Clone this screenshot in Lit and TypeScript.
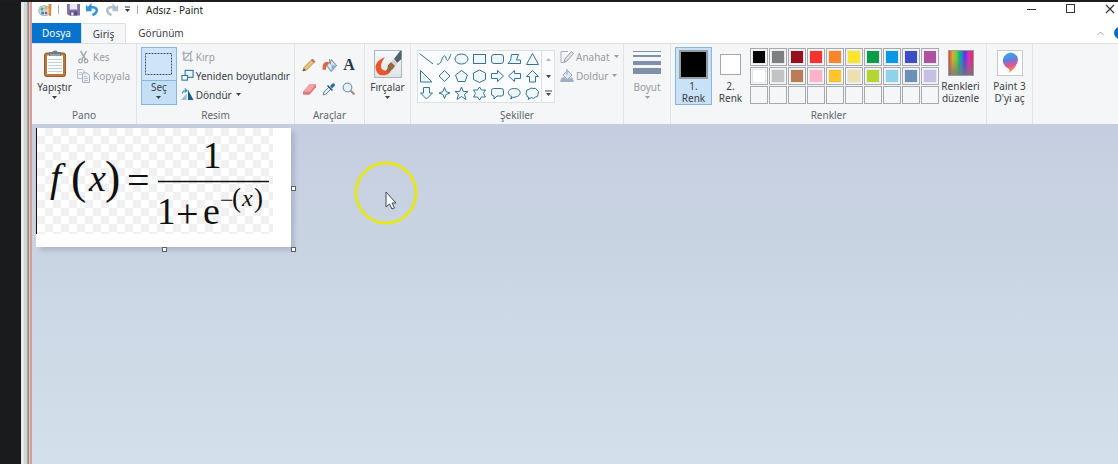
import { LitElement, html, css, svg } from "lit";
import { customElement } from "lit/decorators.js";

const COLORS: string[] = [
  "#000000", "#7f7f7f", "#98101f", "#fb322d", "#fd8529", "#fde52b", "#0c9c48", "#0698e6", "#3c4dc8", "#ae52a0",
  "#ffffff", "#c3c3c3", "#bd7c58", "#fdb2c8", "#fdc42c", "#ecdfb0", "#b3d52f", "#8fd3ea", "#6a90b9", "#c8c0e4",
];

const SHAPES: [string, unknown][] = [
  ["Çizgi", svg`<path d="M1.500 2.500L15 13"/>`],
  ["Eğri", svg`<path d="M1 13C4 14 5 11 6 8S9 3 10 7S12 11 15 3"/>`],
  ["Elips", svg`<ellipse cx="8.500" cy="8" rx="6.500" ry="5"/>`],
  ["Dikdörtgen", svg`<rect x="2.500" y="3.500" width="12" height="9"/>`],
  ["Yuvarlatılmış dikdörtgen", svg`<rect x="2.500" y="3.500" width="12" height="9" rx="2.500"/>`],
  ["Çokgen", svg`<path d="M5.500 3.500H12.500L10.500 9H14.500V12.500H2L4.500 9.500Z"/>`],
  ["Üçgen", svg`<path d="M8.500 2.500L14.500 13.500H2.500Z"/>`],
  ["Dik üçgen", svg`<path d="M2.500 2.500V14H14Z"/>`],
  ["Baklava", svg`<path d="M8.500 2.500L14 8L8.500 13.500L3 8Z"/>`],
  ["Beşgen", svg`<path d="M8.500 2.500L14.500 7L12 13.500H5L2.500 7Z"/>`],
  ["Altıgen", svg`<path d="M8.500 2L14.500 5V11.500L8.500 14.500L2.500 11.500V5Z"/>`],
  ["Sağ ok", svg`<path d="M2.500 5.500H8.500V2.500L14.500 8L8.500 13.500V10.500H2.500Z"/>`],
  ["Sol ok", svg`<path d="M14.500 5.500H8.500V2.500L2.500 8L8.500 13.500V10.500H14.500Z"/>`],
  ["Yukarı ok", svg`<path d="M5.500 14V8.500H2.500L8.500 2.500L14.500 8.500H11.500V14Z"/>`],
  ["Aşağı ok", svg`<path d="M5.500 2.500V8H2.500L8.500 14L14.500 8H11.500V2.500Z"/>`],
  ["Dört köşeli yıldız", svg`<path d="M8.500 2.500L10 6.500L14 8L10 9.500L8.500 13.500L7 9.500L3 8L7 6.500Z"/>`],
  ["Beş köşeli yıldız", svg`<path d="M8.500 2L10.300 6.500H15L11.500 9.500L13 14.500L8.500 11.500L4 14.500L5.500 9.500L2 6.500H6.700Z"/>`],
  ["Altı köşeli yıldız", svg`<path d="M8.500 2L10.500 5H14.500L12.500 8.500L14.500 12H10.500L8.500 15L6.500 12H2.500L4.500 8.500L2.500 5H6.500Z"/>`],
  ["Yuvarlak dikdörtgen balon", svg`<path d="M4.500 3.500H12.500Q14.500 3.500 14.500 5.500V9Q14.500 11 12.500 11H8L5 14V11Q2.500 11 2.500 9V5.500Q2.500 3.500 4.500 3.500Z"/>`],
  ["Oval balon", svg`<path d="M4.500 14L6 11.500C.5 10 1 3.500 8.500 3.500C16 3.500 16 11.500 9 12Q6.500 12.500 4.500 14Z"/>`],
  ["Bulut balon", svg`<path d="M5 12.500Q3 12.500 3 10.500Q1 9 2.500 7Q2 4 5 4.500Q7 2 9 3.500Q12 2.500 13 5Q15.500 6.500 14 9Q14.500 12 11.500 12Q9 14.500 7.500 12.500L4 14.500Z"/>`],
];

const caret = html`<svg class="caret" width="5" height="3" viewBox="0 0 5 3" aria-hidden="true"><path d="M0 0H5L2.500 3Z" fill="currentColor"/></svg>`;

const ico = {
  app: svg`<path d="M2 4Q6 1 11 4Q14 9 10 12Q4 14 1 10Q0 6 2 4Z" fill="#c6d9e4" stroke="#85a4b6" stroke-width=".7"/><circle cx="4" cy="6" r="1.500" fill="#4bb061"/><circle cx="8" cy="5" r="1.500" fill="#ecae35"/><circle cx="4.500" cy="10" r="1.500" fill="#3b7fd4"/><circle cx="8" cy="10" r="1.300" fill="#d14c46"/><path d="M10.500 1H13.500L13 13H11Z" fill="#e3893c"/>`,
  save: svg`<path d="M0 1H14V13.500H2L0 11.500Z" fill="#8472ac"/><path d="M3 1H11V7H3Z" fill="#eeeaf5"/><path d="M3 9H11V13.500H3Z" fill="#5b5078"/><path d="M4.500 10H7V13.500H4.500Z" fill="#e8e4f0"/>`,
  undo: svg`<path d="M3 4.500H7.500Q12 5 11.500 8.500Q11 11.500 7 13" fill="none" stroke="#2f93dc" stroke-width="2.800"/><path d="M6 0V9H0V2L2 4Z" fill="#2f93dc"/>`,
  redo: svg`<path d="M11 4.500H6.500Q2 5 2.500 8.500Q3 11.500 7 13" fill="none" stroke="#b4bec8" stroke-width="2.800"/><path d="M8 0V9H14V2L12 4Z" fill="#b4bec8"/>`,
  paste: svg`<rect x="1.500" y="3" width="21" height="23.500" rx="2" fill="#b9783d" stroke="#965c2c"/><rect x="4" y="5.500" width="16" height="18.500" fill="#fcfdfd"/><path d="M5 9.500H19M5 12.500H19M5 15.500H19M5 18.500H19M5 21.500H19" stroke="#c2d1d8"/><path d="M6 2H9Q12-1 15 2H18V6H6Z" fill="#737c80"/><path d="M7 5H17" stroke="#b8c0c2"/>`,
  cut: svg`<path d="M3.500 1L9 10M9.500 1L4.500 10" stroke="#a2a8ad" stroke-width="1.500" fill="none"/><circle cx="3.500" cy="11" r="1.800" fill="none" stroke="#a2a8ad" stroke-width="1.300"/><circle cx="9" cy="11" r="1.800" fill="none" stroke="#a2a8ad" stroke-width="1.300"/>`,
  copy: svg`<path d="M.5 .5H5.500L7.500 2.500V9.500H.5Z" fill="#f3f5f7" stroke="#b5bdc5"/><path d="M2 3.500H5M2 5.500H5" stroke="#b5bfc9" stroke-width=".8"/><path d="M5.500 4H10L12.500 6.500V13.500H5.500Z" fill="#eef1f3" stroke="#a7b0ba"/><path d="M7 7.500H10M7 9.500H11M7 11.500H11" stroke="#a5b0bc" stroke-width=".8"/>`,
  crop: svg`<path d="M3 1V11H13M1 3.500H10.500V13M3 11L12 1" fill="none" stroke="#a0a5aa" stroke-width="1.200"/>`,
  resize: svg`<rect x="4.500" y="1.500" width="8.500" height="7.500" fill="#eaf4fa" stroke="#3178a0" stroke-width="1.200"/><rect x="1" y="7" width="6" height="5" fill="#fff" stroke="#3178a0" stroke-width="1.200"/>`,
  rotate: svg`<path d="M0 13L6 6V13Z" fill="#a6bac5"/><path d="M7.500 2L13.500 13H7.500Z" fill="#17608d"/><path d="M1.500 6Q2 2 6 3M4 .5L6.500 3L4 5" fill="none" stroke="#3e91bd" stroke-width="1.200"/>`,
  pencil: svg`<path d="M1 13L2 9.500L10.500 1L13 3.500L4.500 12Z" fill="#edc572" stroke="#9d7a47" stroke-width=".8"/><path d="M10.500 1L13 3.500L11.500 5L9 2.500Z" fill="#b27a72"/><path d="M1 13L2 10.500L3.500 12Z" fill="#423c36"/>`,
  fill: svg`<path d="M4.500 7L9 2L13.500 7L8.500 12.500Z" fill="#dfe9f0" stroke="#7f9cb2"/><path d="M8 6L7 1" stroke="#6f8797"/><path d="M.5 11Q0 3.500 5 3.500L7 4.500Q4 6 3.500 11Z" fill="#e4613a"/><path d="M9 6L13 7.500L9 11Z" fill="#85b1d0"/>`,
  eraser: svg`<path d="M1 9L7 2H13V5L7 12H1Z" fill="#e0757b"/><path d="M1 9L7 2H13L7.500 9Z" fill="#f3a3a2"/>`,
  pick: svg`<path d="M1 13L2 10L7 5L9 7L4 12Z" fill="#e2eff6" stroke="#648ca5"/><path d="M6 3L11 8L10 9L5 4Z" fill="#244f78"/><path d="M8 4L10.500 1.500Q13 .5 13 3.500L10 6.500Z" fill="#2e6da1"/>`,
  zoom: svg`<path d="M8.500 8.500L12.500 12.500" stroke="#a38a76" stroke-width="2"/><circle cx="5.500" cy="5.500" r="4.300" fill="#e4f1f9" stroke="#8c9cab" stroke-width="1.300"/>`,
  brush: svg`<defs><linearGradient id="bg" x2="0" y2="1"><stop stop-color="#f8fafb"/><stop offset="1" stop-color="#dde3e7"/></linearGradient></defs><rect x=".5" y=".5" width="27" height="27" fill="url(#bg)" stroke="#afb7bd"/><path d="M11 7Q1 11 1.500 18Q3 27 12 25Q18 23 17 18Q13 22 9 20Q4 16 11 7Z" fill="#ec552b"/><path d="M20 9L26 1H27.500V9L23 13Z" fill="#53606a"/><path d="M17 12L20 9L23.500 13L21 16Z" fill="#d0d2d3"/><path d="M17 12L21 16Q18 22 11 22Q14 19 14 15Z" fill="#9b663d"/>`,
  outline: svg`<path d="M8 1.500H1V12.500H4" fill="none" stroke="#a6adb4"/><path d="M4 12.500L5 9L11.500 1.500L13.500 3.500L7 11Z" fill="#e4e7ea" stroke="#969da5"/>`,
  shapeFill: svg`<path d="M3 6L7.500 1.500L12 6L7.500 10.500Z" fill="#e2e9f0" stroke="#94a3b5"/><path d="M0 13Q1 8 4 8Q7 12 12 8L14 13Z" fill="#9fb0c5"/><path d="M7 0V6" stroke="#94a3b5"/>`,
};

@customElement("app-root")
export class AppRoot extends LitElement {
  static styles = css`
    :host { display: flex; min-height: 100vh; box-sizing: border-box; border-top: 2px solid #1d1d1f; overflow: hidden; font: 10px/12px "Noto Sans", "Open Sans", sans-serif; color: #3b4148; }
    * { box-sizing: border-box; }
    button { font: inherit; color: inherit; background: none; border: 0; padding: 0; margin: 0; cursor: default; }
    svg { display: block; flex: none; }
    .desk { width: 21px; flex: none; background: #1a1b1d; }
    .edge { width: 11px; flex: none; background: linear-gradient(90deg, #e9e9e8 0 3px, #d5d5d3 3px 6px, #a5a3a1 6px 7px, #8f8c8a 7px 8px, #d6cac7 8px 9px, #dc9a95 9px 11px); }
    .window { flex: 1; min-width: 0; display: flex; flex-direction: column; background: #fff; }
    .title { height: 21px; display: flex; align-items: flex-start; padding-left: 6px; color: #1c1e20; }
    .quick { display: flex; align-items: center; height: 15px; gap: 6px; }
    .rule { width: 1px; height: 9px; margin-right: 2px; background: #a9aaac; }
    h1 { margin: 0; font: inherit; }
    .sys { display: flex; margin-left: auto; height: 14px; }
    .sys button { width: 40px; display: grid; place-items: center; }
    .sys .close { width: 27px; padding-left: 11px; }
    .sys .min { width: 38px; }
    .tabs { height: 20px; display: flex; }
    .tab { width: 70px; }
    .tab.file { width: 49px; background: #0673cc; color: #fff; }
    .tab.on { width: 45px; background: #f5f6f8; border: 1px solid #dddfe1; border-bottom: 0; }
    .help { margin-left: auto; display: flex; align-items: center; gap: 10px; overflow: hidden; width: 21px; }
    .ribbon { height: 81px; display: flex; background: #f4f6f8; border-top: 1px solid #dddfe2; overflow: hidden; }
    .group { flex: none; display: flex; flex-direction: column; border-right: 1px solid #e1e3e6; padding: 3px 4px 2px; }
    .items { display: flex; flex: 1; }
    .group h2 { margin: 0; font: inherit; line-height: 14px; text-align: center; color: #61676d; }
    .pano { width: 105px; }
    .resim { width: 158px; }
    .araclar { width: 70px; }
    .brushes { width: 46px; }
    .sekiller { width: 213px; }
    .size { width: 47px; }
    .renkler { width: 316px; }
    .p3d { width: 46px; }
    .big { height: 58px; display: flex; flex-direction: column; align-items: center; padding-top: 3px; }
    .big .pic { height: 31px; }
    .caret { margin-top: 3px; }
    .rows { display: flex; flex-direction: column; }
    .row { height: 19px; display: flex; align-items: center; gap: 2px; white-space: nowrap; }
    .row .caret { margin: 0 0 0 2px; }
    .off { color: #989da3; }
    .paste { width: 37px; }
    .pano .rows { padding-left: 4px; }
    .select { width: 37px; border: 1px solid #86b8df; background: #c5e0f6; padding: 0; }
    .select .pic { height: 33px; width: 100%; border-bottom: 1px solid #86b8df; display: grid; place-items: center; background: #cfe5f7; }
    .resim .rows { padding-left: 4px; }
    .tools { display: grid; grid-template-columns: repeat(3, 20px); grid-template-rows: 24px 24px; place-items: center; padding: 6px 0 0; height: 60px; }
    .letter { font: bold 16px/16px "Liberation Serif", serif; color: #27364a; }
    .brushes .items, .size .items, .p3d .items { justify-content: center; }
    .gallery { display: flex; height: 53px; margin: 3px 5px 0 2px; border: 1px solid #dbe1e7; background: #fbfcfd; }
    .shapes { display: grid; grid-template-columns: repeat(7, 17px); grid-template-rows: repeat(3, 17px); width: 123px; justify-content: space-between; }
    .shapes svg { fill: #f1f8fc; stroke: #36729a; stroke-width: 1; }
    .scroll { width: 13px; border-left: 1px solid #dbe1e7; display: grid; grid-template-rows: repeat(3, 17px); place-items: center; }
    .scroll .caret { margin: 0; }
    .color { width: 37px; height: 58px; display: flex; flex-direction: column; align-items: center; line-height: 12px; border: 1px solid transparent; }
    .color.on { border-color: #86b8df; background: #c9e2f7; }
    .color .pic { height: 32px; display: grid; place-items: center; }
    .chip { display: block; width: 21px; height: 21px; border: 1px solid #a4a7aa; background: #fff; }
    .on .chip { width: 29px; height: 29px; border: 2px solid #969ca1; background: #000; }
    .palette { display: grid; grid-template-columns: repeat(10, 18px); grid-template-rows: repeat(3, 18px); gap: 1px; margin: 1px 0 0 1px; }
    .swatch { border: 1px solid #a6a9ad; padding: 1px; }
    .swatch i { display: block; height: 100%; border: 1px solid #e7e9ec; }
    .swatch.void i { border: 0; }
    .edit { width: 43px; }
    .edit .pic { height: 30px; }
    .spectrum { width: 26px; height: 26px; border: 1px solid #999da1; display: block; background: linear-gradient(0deg, #777c 0, #7770 70%), linear-gradient(90deg, #e43e3a, #e7a52e 14%, #72cf3a 30%, #1bb968 42%, #227fde 54%, #5c35dc 66%, #d82fc3 82%, #ed2750); }
    .three { width: 26px; height: 26px; border: 1px solid #c5cad0; background: #fdfdfe; display: block; }
    .work { flex: 1; position: relative; padding: 4px; background: linear-gradient(#c5cee0 0, #c9d4e2 35%, #cfdce8 75%, #d3dfea); }
    .paper { width: 255px; height: 119px; background: #fff; box-shadow: 4px 4px 4px #8895a966; position: relative; }
    .image { width: 237px; height: 106px; border-left: 1px solid #111; background: repeating-conic-gradient(#f1f1f1 0 25%, #fff 0 50%) 0 0 / 16px 16px; }
    .formula text { font-family: "Liberation Serif", serif; fill: #101010; }
    .handle { position: absolute; width: 5px; height: 5px; border: 1px solid #596068; background: #fff; }
    .handle.e { left: 255px; top: 58px; }
    .handle.s { left: 126px; top: 119px; }
    .handle.se { left: 255px; top: 119px; }
    .pointer { position: absolute; left: 322px; top: 37px; }
  `;

  private icon(pic: unknown, size = 14) {
    return html`<svg width=${size} height=${size} viewBox="0 0 14 14" aria-hidden="true">${pic}</svg>`;
  }

  private swatches() {
    return Array.from({ length: 30 }, (_, i) => COLORS[i]
      ? html`<button class="swatch" aria-label="Renk ${COLORS[i]}"><i style="background:${COLORS[i]}"></i></button>`
      : html`<button class="swatch void" aria-label="Boş renk"><i></i></button>`);
  }

  render() {
    return html`
      <div class="desk"></div>
      <div class="edge"></div>
      <main class="window">
        <header class="title">
          <div class="quick">
            ${this.icon(ico.app)}
            <span class="rule"></span>
            <button aria-label="Kaydet">${this.icon(ico.save, 13)}</button>
            <button aria-label="Geri al">${this.icon(ico.undo, 13)}</button>
            <button aria-label="Yinele">${this.icon(ico.redo, 13)}</button>
            <button aria-label="Özelleştir"><svg width="7" height="7" viewBox="0 0 7 7"><path d="M1 1H6" stroke="#333"/><path d="M1 3H6L3.500 6Z" fill="#333"/></svg></button>
            <span class="rule"></span>
            <h1>Adsız - Paint</h1>
          </div>
          <div class="sys">
            <button class="min" aria-label="Simge durumuna küçült"><svg width="10" height="10"><path d="M0 5.500H9" stroke="#333"/></svg></button>
            <button aria-label="Ekranı kapla"><svg width="10" height="10"><rect x=".5" y=".5" width="8" height="8" fill="none" stroke="#333"/></svg></button>
            <button class="close" aria-label="Kapat"><svg width="10" height="10"><path d="M1 1L9 9M9 1L1 9" stroke="#333" stroke-width="1.200"/></svg></button>
          </div>
        </header>
        <nav class="tabs">
          <button class="tab file">Dosya</button>
          <button class="tab on">Giriş</button>
          <button class="tab">Görünüm</button>
          <div class="help">
            <svg width="7" height="5" viewBox="0 0 7 5"><path d="M.5 4L3.500 1L6.500 4" fill="none" stroke="#a1a4a8"/></svg>
            <svg width="12" height="12"><circle cx="6" cy="6" r="6" fill="#0a6cc0"/></svg>
          </div>
        </nav>
        <div class="ribbon">
          <section class="group pano">
            <div class="items">
              <button class="big paste"><span class="pic"><svg width="24" height="28" viewBox="0 0 24 28">${ico.paste}</svg></span>Yapıştır${caret}</button>
              <div class="rows">
                <button class="row off">${this.icon(ico.cut)}Kes</button>
                <button class="row off">${this.icon(ico.copy)}Kopyala</button>
              </div>
            </div>
            <h2>Pano</h2>
          </section>
          <section class="group resim">
            <div class="items">
              <button class="big select"><span class="pic"><svg width="27" height="23"><rect x=".5" y=".5" width="26" height="21" fill="none" stroke="#31587c" stroke-dasharray="2 1"/></svg></span>Seç${caret}</button>
              <div class="rows">
                <button class="row off">${this.icon(ico.crop, 13)}Kırp</button>
                <button class="row">${this.icon(ico.resize, 13)}Yeniden boyutlandır</button>
                <button class="row">${this.icon(ico.rotate, 13)}Döndür${caret}</button>
              </div>
            </div>
            <h2>Resim</h2>
          </section>
          <section class="group araclar">
            <div class="items tools">
              <button aria-label="Kurşun kalem">${this.icon(ico.pencil)}</button>
              <button aria-label="Boya doldur">${this.icon(ico.fill, 15)}</button>
              <button class="letter">A</button>
              <button aria-label="Silgi">${this.icon(ico.eraser, 15)}</button>
              <button aria-label="Renk seçici">${this.icon(ico.pick)}</button>
              <button aria-label="Büyüteç">${this.icon(ico.zoom)}</button>
            </div>
            <h2>Araçlar</h2>
          </section>
          <section class="group brushes">
            <div class="items"><button class="big"><span class="pic"><svg width="28" height="28" viewBox="0 0 28 28">${ico.brush}</svg></span>Fırçalar${caret}</button></div>
          </section>
          <section class="group sekiller">
            <div class="items">
              <div class="gallery">
                <div class="shapes">${SHAPES.map(([name, pic]) => html`<button aria-label=${name}><svg width="17" height="17" viewBox="0 0 17 17">${pic}</svg></button>`)}</div>
                <div class="scroll"><button class="off" aria-label="Yukarı"><svg width="5" height="3"><path d="M0 3H5L2.500 0Z" fill="#b2b6ba"/></svg></button><button aria-label="Aşağı">${caret}</button><button aria-label="Tümü"><svg width="7" height="7"><path d="M0 1H7" stroke="#40464c"/><path d="M1 3H6L3.500 6Z" fill="#40464c"/></svg></button></div>
              </div>
              <div class="rows">
                <button class="row off">${this.icon(ico.outline)}Anahat${caret}</button>
                <button class="row off">${this.icon(ico.shapeFill)}Doldur${caret}</button>
              </div>
            </div>
            <h2>Şekiller</h2>
          </section>
          <section class="group size">
            <div class="items"><button class="big off"><span class="pic"><svg width="28" height="28"><path d="M0 1.500H28" stroke="#8090aa"/><path d="M0 6H28" stroke="#8090aa" stroke-width="2"/><path d="M0 13H28" stroke="#8090aa" stroke-width="4"/><path d="M0 21H28" stroke="#8090aa" stroke-width="6"/></svg></span>Boyut${caret}</button></div>
          </section>
          <section class="group renkler">
            <div class="items">
              <button class="color on"><span class="pic"><span class="chip"></span></span><span>1.</span><span>Renk</span></button>
              <button class="color"><span class="pic"><span class="chip"></span></span><span>2.</span><span>Renk</span></button>
              <div class="palette">${this.swatches()}</div>
              <button class="big edit"><span class="pic"><span class="spectrum"></span></span><span>Renkleri</span><span>düzenle</span></button>
            </div>
            <h2>Renkler</h2>
          </section>
          <section class="group p3d">
            <div class="items"><button class="big edit"><span class="pic"><span class="three"><svg width="24" height="24" viewBox="0 0 24 24"><defs><linearGradient id="pg" x1=".3" y1="0" x2=".5" y2="1"><stop stop-color="#27b4ec"/><stop offset=".4" stop-color="#6b78dc"/><stop offset=".65" stop-color="#df5592"/><stop offset="1" stop-color="#f8a42c"/></linearGradient></defs><path d="M11 22Q13 18 8 16Q4 12 5 8Q7 2 13 1.500Q20 3 20 9Q19 16 11 22Z" fill="url(#pg)"/></svg></span></span><span>Paint 3</span><span>D'yi aç</span></button></div>
          </section>
        </div>
        <div class="work">
          <div class="paper">
            <div class="image">
              <svg class="formula" width="236" height="106" viewBox="37 128 236 106" role="img" aria-label="f(x) = 1 / (1 + e^-(x))">
                <text x="50" y="191" font-size="40" font-style="italic">f</text>
                <text x="71" y="193" font-size="46">(</text>
                <text x="89" y="191" font-size="38" font-style="italic">x</text>
                <text x="105" y="193" font-size="46">)</text>
                <text x="127" y="194" font-size="40">=</text>
                <text x="203" y="168" font-size="37">1</text>
                <path d="M158 181.500H269" stroke="#101010" stroke-width="1.500"/>
                <text x="157" y="224" font-size="37">1</text>
                <text x="176" y="227" font-size="40">+</text>
                <text x="203" y="224" font-size="38">e</text>
                <text x="220" y="208" font-size="24">−</text>
                <text x="232" y="207" font-size="27">(</text>
                <text x="242" y="206" font-size="24" font-style="italic">x</text>
                <text x="254" y="207" font-size="27">)</text>
              </svg>
            </div>
            <span class="handle e"></span><span class="handle s"></span><span class="handle se"></span>
          </div>
          <svg class="pointer" width="64" height="64" viewBox="0 0 64 64" aria-hidden="true"><circle cx="32" cy="32" r="30" fill="none" stroke="#e6e61c" stroke-width="3"/><path d="M32 31V46L35.500 43L38 48L40.500 47L38 42H42Z" fill="#fbfcfe" stroke="#454b54"/></svg>
        </div>
      </main>
    `;
  }
}
